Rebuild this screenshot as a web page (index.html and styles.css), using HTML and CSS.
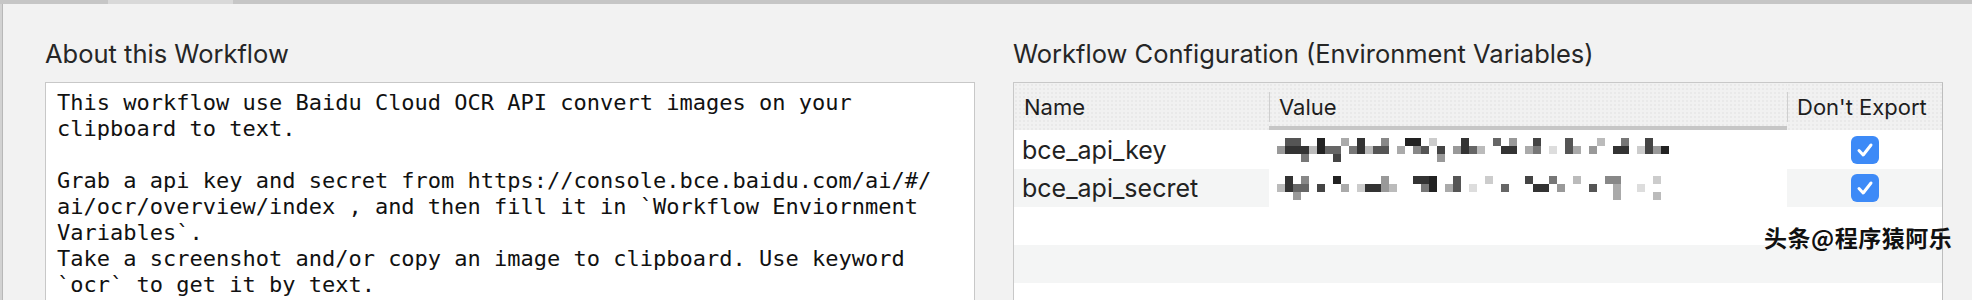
FILE: index.html
```html
<!DOCTYPE html>
<html lang="en">
<head>
  <meta charset="UTF-8" />
  <title>Workflow Configuration</title>
  <link rel="stylesheet" href="styles.css">
</head>
<body>
  <div class="topbar"><div class="topbar-tab"></div></div>
  <div class="window">
    <div class="edge"></div>
    <div class="panels">

      <!-- About -->
      <section class="about">
        <h2 class="heading">About this Workflow</h2>
        <pre class="notes">This workflow use Baidu Cloud OCR API convert images on your
clipboard to text.

Grab a api key and secret from https://console.bce.baidu.com/ai/#/
ai/ocr/overview/index , and then fill it in `Workflow Enviornment
Variables`.
Take a screenshot and/or copy an image to clipboard. Use keyword
`ocr` to get it by text.</pre>
      </section>

      <!-- Environment variables -->
      <section class="config">
        <h2 class="heading">Workflow Configuration (Environment Variables)</h2>
        <div class="vars">
          <div class="th">Name</div>
          <div class="th th-value th-sep">Value</div>
          <div class="th th-sep">Don't Export</div>

          <div class="td">bce_api_key</div>
          <div class="td td-value">
            <svg width="400" height="24" viewBox="0 0 400 24">
              <rect x="0" y="8" width="8" height="8" fill="#999"/>
              <rect x="8" y="0" width="16" height="8" fill="#555"/>
              <rect x="8" y="8" width="24" height="8" fill="#333"/>
              <rect x="24" y="16" width="8" height="8" fill="#777"/>
              <rect x="32" y="8" width="8" height="8" fill="#bbb"/>
              <rect x="40" y="0" width="8" height="16" fill="#222"/>
              <rect x="48" y="8" width="16" height="8" fill="#666"/>
              <rect x="56" y="16" width="8" height="8" fill="#444"/>
              <rect x="64" y="0" width="8" height="8" fill="#aaa"/>
              <rect x="72" y="8" width="8" height="8" fill="#777"/>
              <rect x="80" y="0" width="8" height="16" fill="#333"/>
              <rect x="88" y="8" width="8" height="8" fill="#bbb"/>
              <rect x="96" y="8" width="16" height="8" fill="#555"/>
              <rect x="104" y="0" width="8" height="8" fill="#888"/>
              <rect x="120" y="8" width="8" height="8" fill="#aaa"/>
              <rect x="128" y="0" width="16" height="8" fill="#222"/>
              <rect x="136" y="8" width="8" height="8" fill="#888"/>
              <rect x="144" y="8" width="8" height="8" fill="#555"/>
              <rect x="152" y="0" width="8" height="8" fill="#ccc"/>
              <rect x="160" y="8" width="8" height="8" fill="#444"/>
              <rect x="160" y="16" width="8" height="8" fill="#999"/>
              <rect x="176" y="8" width="8" height="8" fill="#999"/>
              <rect x="184" y="0" width="8" height="16" fill="#333"/>
              <rect x="192" y="8" width="8" height="8" fill="#666"/>
              <rect x="200" y="8" width="8" height="8" fill="#bbb"/>
              <rect x="216" y="0" width="8" height="8" fill="#666"/>
              <rect x="224" y="8" width="16" height="8" fill="#333"/>
              <rect x="232" y="0" width="8" height="8" fill="#999"/>
              <rect x="248" y="8" width="8" height="8" fill="#aaa"/>
              <rect x="256" y="0" width="8" height="8" fill="#444"/>
              <rect x="256" y="8" width="8" height="8" fill="#777"/>
              <rect x="272" y="8" width="8" height="8" fill="#ddd"/>
              <rect x="288" y="0" width="8" height="16" fill="#555"/>
              <rect x="296" y="8" width="8" height="8" fill="#aaa"/>
              <rect x="312" y="8" width="8" height="8" fill="#999"/>
              <rect x="320" y="0" width="8" height="8" fill="#bbb"/>
              <rect x="336" y="8" width="16" height="8" fill="#333"/>
              <rect x="344" y="0" width="8" height="8" fill="#777"/>
              <rect x="360" y="8" width="8" height="8" fill="#ccc"/>
              <rect x="368" y="0" width="8" height="16" fill="#444"/>
              <rect x="376" y="8" width="8" height="8" fill="#999"/>
              <rect x="384" y="8" width="8" height="8" fill="#222"/>
            </svg>
          </div>
          <div class="td td-check"><span class="check"><svg width="28" height="28" viewBox="0 0 28 28"><path d="M8 14.5l4.2 4.5L20 9" fill="none" stroke="#fff" stroke-width="3" stroke-linecap="round" stroke-linejoin="round"/></svg></span></div>

          <div class="td alt">bce_api_secret</div>
          <div class="td td-value">
            <svg width="400" height="24" viewBox="0 0 400 24">
              <rect x="0" y="8" width="8" height="8" fill="#bbb"/>
              <rect x="8" y="0" width="8" height="16" fill="#333"/>
              <rect x="16" y="8" width="16" height="8" fill="#666"/>
              <rect x="16" y="16" width="8" height="8" fill="#999"/>
              <rect x="24" y="0" width="8" height="8" fill="#888"/>
              <rect x="40" y="8" width="8" height="8" fill="#444"/>
              <rect x="56" y="0" width="8" height="8" fill="#222"/>
              <rect x="64" y="8" width="8" height="8" fill="#aaa"/>
              <rect x="80" y="8" width="8" height="8" fill="#ccc"/>
              <rect x="88" y="8" width="16" height="8" fill="#333"/>
              <rect x="104" y="0" width="8" height="16" fill="#999"/>
              <rect x="112" y="8" width="8" height="8" fill="#bbb"/>
              <rect x="136" y="0" width="16" height="8" fill="#333"/>
              <rect x="144" y="8" width="8" height="8" fill="#777"/>
              <rect x="152" y="0" width="8" height="16" fill="#222"/>
              <rect x="168" y="8" width="8" height="8" fill="#aaa"/>
              <rect x="176" y="0" width="8" height="16" fill="#555"/>
              <rect x="192" y="8" width="8" height="8" fill="#ddd"/>
              <rect x="208" y="0" width="8" height="8" fill="#ccc"/>
              <rect x="224" y="8" width="8" height="8" fill="#666"/>
              <rect x="248" y="0" width="8" height="8" fill="#444"/>
              <rect x="256" y="8" width="16" height="8" fill="#333"/>
              <rect x="272" y="0" width="8" height="8" fill="#777"/>
              <rect x="280" y="8" width="8" height="8" fill="#999"/>
              <rect x="296" y="0" width="8" height="8" fill="#bbb"/>
              <rect x="312" y="8" width="8" height="8" fill="#555"/>
              <rect x="328" y="0" width="16" height="8" fill="#888"/>
              <rect x="336" y="8" width="8" height="16" fill="#aaa"/>
              <rect x="360" y="8" width="8" height="8" fill="#ddd"/>
              <rect x="376" y="0" width="8" height="8" fill="#ccc"/>
              <rect x="376" y="16" width="8" height="8" fill="#bbb"/>
            </svg>
          </div>
          <div class="td alt td-check"><span class="check"><svg width="28" height="28" viewBox="0 0 28 28"><path d="M8 14.5l4.2 4.5L20 9" fill="none" stroke="#fff" stroke-width="3" stroke-linecap="round" stroke-linejoin="round"/></svg></span></div>

          <div class="td"></div><div class="td"></div><div class="td"></div>
          <div class="td alt"></div><div class="td alt"></div><div class="td alt"></div>
          <div class="td"></div><div class="td"></div><div class="td"></div>
        </div>
        <div class="watermark">头条@程序猿阿乐</div>
      </section>

    </div>
  </div>
</body>
</html>
```

FILE: styles.css
```css
body {
  margin: 0;
  height: 300px;
  overflow: hidden;
  background: #f2f2f2;
  font-family: Inter, "Noto Sans", sans-serif;
  color: #222;
}

/* 상단 창 테두리 */
.topbar {
  height: 4px;
  background: #c6c6c6;
}
.topbar-tab {
  margin-left: 108px;
  width: 125px;
  height: 4px;
  background: #d9d9d9;
}

.window {
  display: flex;
}
.edge {
  width: 3px;
  height: 296px;
  background: #d2d2d2;
  border-right: 1px solid #b8b8b8;
  box-sizing: border-box;
}
.panels {
  display: flex;
  gap: 38px;
  padding: 34px 0 0 42px;
}

.heading {
  margin: 0 0 12px;
  font-size: 25.5px;
  line-height: 32px;
  font-weight: 400;
  color: #262626;
}

/* About 텍스트 영역 */
.about {
  width: 930px;
}
.notes {
  margin: 0;
  height: 260px;
  box-sizing: border-box;
  padding: 7px 11px;
  background: #fff;
  border: 1px solid #c8c8c8;
  font-family: "DejaVu Sans Mono", monospace;
  font-size: 22px;
  line-height: 26px;
  color: #111;
}

/* 환경 변수 테이블 */
.config {
  position: relative;
  width: 930px;
}
.vars {
  display: grid;
  grid-template-columns: 255px 518px 155px;
  grid-auto-rows: 38px;
  grid-template-rows: 47px 39px;
  height: 260px;
  background: #fff;
  border: 1px solid #c8c8c8;
  border-right-color: #bdbdbd;
}
.th {
  display: flex;
  align-items: center;
  padding-left: 10px;
  font-size: 22px;
  color: #1e1e1e;
  background-color: #f1f1f1;
  background-image: radial-gradient(#e0e0e0 0.6px, transparent 0.8px);
  background-size: 4px 4px;
}
.th-sep {
  background-image: linear-gradient(#cfcfcf, #cfcfcf), radial-gradient(#e0e0e0 0.6px, transparent 0.8px);
  background-size: 1px 30px, 4px 4px;
  background-position: left center, 0 0;
  background-repeat: no-repeat, repeat;
}
.th-value {
  box-shadow: inset 0 -4px 0 #c6c6c6;
}
.td {
  display: flex;
  align-items: center;
  padding-left: 8px;
  font-size: 25px;
  color: #222;
}
.td.alt {
  background: #f4f5f5;
}
.td-value {
  padding-left: 8px;
  background: #fff;
}
.td-check {
  justify-content: center;
  padding-left: 0;
}
.check {
  display: block;
  width: 28px;
  height: 28px;
  border-radius: 6px;
  background: #3d8af7;
}
.check svg {
  display: block;
}

.watermark {
  position: absolute;
  left: 751px;
  top: 182px;
  white-space: nowrap;
  font-family: "Noto Sans CJK SC", sans-serif;
  font-size: 23px;
  font-weight: 700;
  color: #111;
  letter-spacing: 0.5px;
}
```
